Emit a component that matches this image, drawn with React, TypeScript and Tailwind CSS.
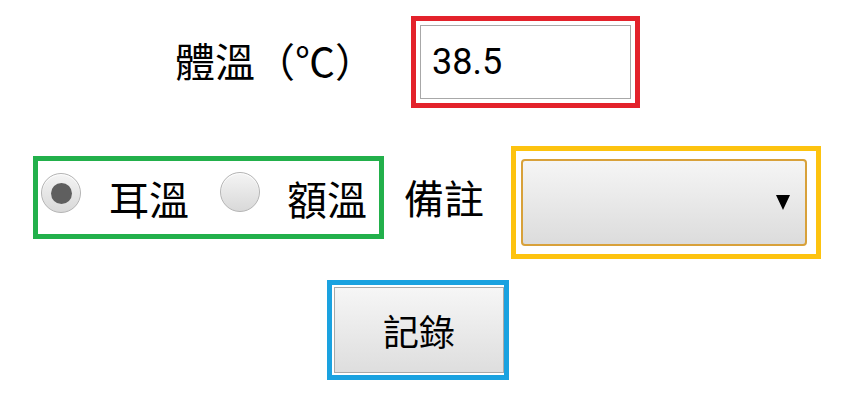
const cjk = "font-['Noto_Sans_CJK_TC','Noto_Sans_CJK_JP',sans-serif]";

function Radio({ checked }: { checked?: boolean }) {
  return (
    <span className="flex h-[40px] w-[40px] shrink-0 items-center justify-center rounded-full border border-[#b4b4b4] bg-gradient-to-b from-[#f4f4f4] to-[#d9d9d9] shadow-[inset_0_1px_1px_#ffffff]">
      {checked && <span className="h-[21px] w-[21px] rounded-full bg-[#5f5f5f]" />}
    </span>
  );
}

export default function App() {
  return (
    <div className={`h-[405px] w-[843px] overflow-hidden bg-white text-black ${cjk}`}>
      {/* 體溫 */}
      <div className="flex items-start pt-[16px]">
        <span className="ml-[175px] mt-[24px] w-[236px] text-[40px] leading-none">體溫（℃）</span>
        <div className="h-[92px] w-[229px] border-[5px] border-[#e3222b] bg-white p-[4px]">
          <input
            readOnly
            value="38.5"
            className="h-[74px] w-[211px] border border-[#a8a8a8] bg-white pl-[11px] font-['Roboto',sans-serif] text-[36px] text-black outline-none"
          />
        </div>
      </div>

      {/* 耳溫 / 額溫 / 備註 */}
      <div className="mt-[38px] flex items-start">
        <div className="ml-[33px] mt-[10px] flex h-[83px] w-[351px] items-start border-[5px] border-[#22b04b]">
          <span className="ml-[3px] mt-[12px]">
            <Radio checked />
          </span>
          <span className="ml-[28px] mt-[17px] text-[40px] leading-none">耳溫</span>
          <span className="ml-[31px] mt-[11px]">
            <Radio />
          </span>
          <span className="ml-[27px] mt-[17px] text-[40px] leading-none">額溫</span>
        </div>
        <span className="ml-[20px] mt-[31px] text-[40px] leading-none">備註</span>
        <div className="ml-[27px] h-[113px] w-[310px] border-[5px] border-[#fdc30f] pl-[5px] pt-[8px]">
          <div className="flex h-[87px] w-[286px] items-center justify-end rounded-[4px] border-2 border-[#d8a13a] bg-gradient-to-b from-[#f5f5f5] to-[#dcdcdc] pr-[15px]">
            <svg width="14" height="15" viewBox="0 0 14 15">
              <polygon points="0,0 14,0 7,15" fill="#000" />
            </svg>
          </div>
        </div>
      </div>

      {/* 記錄 */}
      <div className="mt-[21px] flex">
        <div className="ml-[327px] h-[100px] w-[182px] border-[5px] border-[#1aa2e0] pl-[2px] pt-[2px]">
          <button className="flex h-[86px] w-[170px] items-center justify-center border border-[#a9a9a9] bg-gradient-to-b from-[#f6f6f6] to-[#dedede] text-[36px] leading-none">
            記錄
          </button>
        </div>
      </div>
    </div>
  );
}
